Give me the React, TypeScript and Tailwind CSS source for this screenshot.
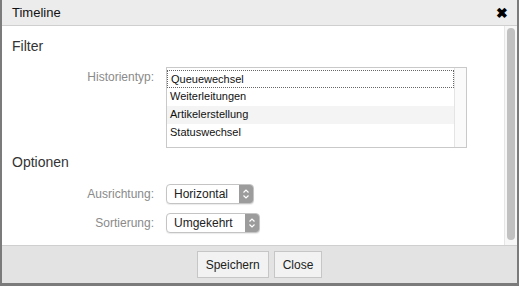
import { ReactNode } from "react";

type FieldProps = {
    label: string;
    children: ReactNode;
};

function Field({ label, children }: FieldProps) {
    return (
        <div className="flex items-center">
            <span className="w-[154px] pr-[12px] text-right text-[12px] text-[#8a8a8a]">{label}</span>
            {children}
        </div>
    );
}

function Select({ value, width }: { value: string; width: string }) {
    return (
        <div className={`flex h-[20px] ${width} items-stretch overflow-hidden rounded-[4px] border border-[#c4c4c4] bg-white shadow-[0_1px_1px_rgba(0,0,0,0.08)]`}>
            <span className="flex-1 pl-[7px] text-[12px] leading-[18px] text-[#222]">{value}</span>
            <span className="flex w-[14px] items-center justify-center bg-[#9c9c9c]">
                <svg width="8" height="12" viewBox="0 0 8 12" fill="none" stroke="white" strokeWidth="1.2">
                    <path d="M1.5 4.5 L4 2 L6.5 4.5" />
                    <path d="M1.5 7.5 L4 10 L6.5 7.5" />
                </svg>
            </span>
        </div>
    );
}

export default function App() {
    const options = ["Queuewechsel", "Weiterleitungen", "Artikelerstellung", "Statuswechsel"];
    return (
        <div className="flex h-[286px] w-[519px] flex-col border-b-[3px] border-l-2 border-r-2 border-[#7b7b7b] font-['Liberation_Sans',Arial,sans-serif]">
            <div className="flex h-[26px] shrink-0 items-center justify-between border-b border-[#cfcfcf] bg-[#ececec] pl-[10px] pr-[9px]">
                <span className="text-[13px] text-[#111]">Timeline</span>
                <span className="text-[14px] font-bold leading-none text-black">✖</span>
            </div>
            <div className="flex min-h-0 flex-1 bg-white">
                <div className="flex-1 pl-[10px]">
                    <div className="mt-[10px] text-[14px] text-[#333]">Filter</div>
                    <div className="mt-[10px] flex items-start">
                        <span className="w-[154px] pr-[12px] pt-[1px] text-right text-[12px] text-[#8a8a8a]">Historientyp:</span>
                        <div className="flex h-[81px] w-[301px] border border-[#c9c9c9] bg-white">
                            <div className="flex-1 pt-[2px]">
                                {options.map((o, i) => (
                                    <div
                                        key={o}
                                        className={
                                            "h-[18px] pl-[3px] text-[11px] leading-[17px] text-[#111] " +
                                            (i === 0 ? "border border-dotted border-[#666] pl-[2px] leading-[16px]" : "") +
                                            (i === 2 ? " bg-[#f4f4f4]" : "")
                                        }
                                    >
                                        {o}
                                    </div>
                                ))}
                            </div>
                            <div className="w-[12px] border-l border-[#e4e4e4] bg-[#fafafa]" />
                        </div>
                    </div>
                    <div className="mt-[4px] text-[14px] text-[#333]">Optionen</div>
                    <div className="mt-[11px] flex flex-col gap-[9px]">
                        <Field label="Ausrichtung:">
                            <Select value="Horizontal" width="w-[88px]" />
                        </Field>
                        <Field label="Sortierung:">
                            <Select value="Umgekehrt" width="w-[94px]" />
                        </Field>
                    </div>
                </div>
                <div className="flex w-[13px] justify-center border-l border-[#e6e6e6] bg-[#f7f7f7] pt-[2px] pb-[5px]">
                    <div className="w-[8px] rounded-full bg-[#c1c1c1]" />
                </div>
            </div>
            <div className="flex h-[38px] shrink-0 items-center justify-center gap-[5px] border-t border-[#cfcfcf] bg-[#e3e3e3]">
                <button className="h-[27px] border border-[#c6c6c6] bg-[#f2f2f2] px-[8px] text-[12px] text-[#222]">Speichern</button>
                <button className="h-[27px] border border-[#c6c6c6] bg-[#f2f2f2] px-[8px] text-[12px] text-[#222]">Close</button>
            </div>
        </div>
    );
}
